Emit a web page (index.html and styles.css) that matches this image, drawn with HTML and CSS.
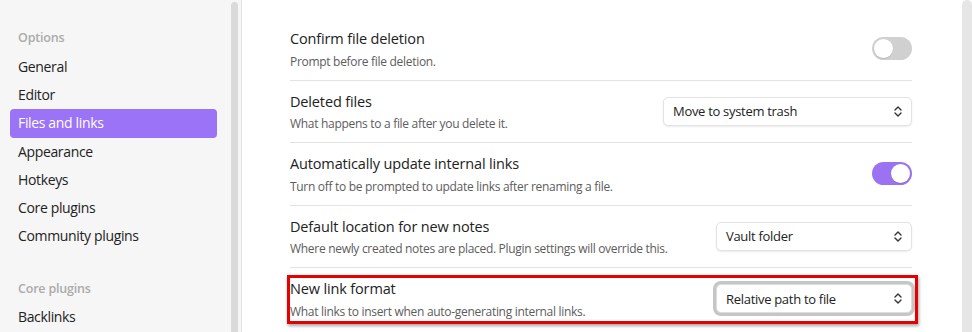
FILE: index.html
```html
<!DOCTYPE html>
<html>
<head>
<meta charset="utf-8">
<link rel="stylesheet" href="styles.css">
</head>
<body>
<div class="app">
  <aside class="sidebar">
    <nav class="nav">
      <div class="nav-header first">Options</div>
      <div class="nav-item">General</div>
      <div class="nav-item">Editor</div>
      <div class="nav-item active">Files and links</div>
      <div class="nav-item">Appearance</div>
      <div class="nav-item">Hotkeys</div>
      <div class="nav-item">Core plugins</div>
      <div class="nav-item">Community plugins</div>
      <div class="nav-header">Core plugins</div>
      <div class="nav-item">Backlinks</div>
    </nav>
    <div class="side-scroll"><div class="side-thumb"></div></div>
  </aside>
  <main class="main">
    <div class="content">
      <div class="setting">
        <div class="info">
          <div class="name">Confirm file deletion</div>
          <div class="desc">Prompt before file deletion.</div>
        </div>
        <div class="toggle"><div class="knob"></div></div>
      </div>
      <div class="setting">
        <div class="info">
          <div class="name">Deleted files</div>
          <div class="desc">What happens to a file after you delete it.</div>
        </div>
        <div class="dropdown wide"><span>Move to system trash</span>
          <svg class="chev" width="10" height="13" viewBox="0 0 10 13"><path d="M2 5 L5 2 L8 5 M2 8 L5 11 L8 8" fill="none" stroke="#333" stroke-width="1.4" stroke-linecap="round" stroke-linejoin="round"/></svg>
        </div>
      </div>
      <div class="setting">
        <div class="info">
          <div class="name">Automatically update internal links</div>
          <div class="desc">Turn off to be prompted to update links after renaming a file.</div>
        </div>
        <div class="toggle on"><div class="knob"></div></div>
      </div>
      <div class="setting">
        <div class="info">
          <div class="name">Default location for new notes</div>
          <div class="desc">Where newly created notes are placed. Plugin settings will override this.</div>
        </div>
        <div class="dropdown"><span>Vault folder</span>
          <svg class="chev" width="10" height="13" viewBox="0 0 10 13"><path d="M2 5 L5 2 L8 5 M2 8 L5 11 L8 8" fill="none" stroke="#333" stroke-width="1.4" stroke-linecap="round" stroke-linejoin="round"/></svg>
        </div>
      </div>
      <div class="setting highlight">
        <div class="info">
          <div class="name">New link format</div>
          <div class="desc">What links to insert when auto-generating internal links.</div>
        </div>
        <div class="dropdown focus"><span>Relative path to file</span>
          <svg class="chev" width="10" height="13" viewBox="0 0 10 13"><path d="M2 5 L5 2 L8 5 M2 8 L5 11 L8 8" fill="none" stroke="#333" stroke-width="1.4" stroke-linecap="round" stroke-linejoin="round"/></svg>
        </div>
        <div class="redbox"></div>
      </div>
    </div>
    <div class="main-scroll"><div class="main-thumb"></div></div>
  </main>
</div>
</body>
</html>
```
FILE: styles.css
```css
* { box-sizing: border-box; }
html, body { margin: 0; padding: 0; }
body {
  width: 972px;
  height: 332px;
  overflow: hidden;
  font-family: "Open Sans", "Noto Sans", sans-serif;
  color: #222;
  background: #fff;
}
.app { display: flex; height: 332px; }

.sidebar {
  width: 242px;
  flex: none;
  display: flex;
  background: #f6f6f6;
  border-right: 1px solid #e2e2e2;
}
.nav {
  width: 231px;
  padding: 0 14px 0 10px;
}
.nav-header {
  margin: 29px 0 4px 8px;
  height: 20px;
  line-height: 20px;
  font-size: 12.5px;
  font-weight: 600;
  letter-spacing: -0.2px;
  color: #ababab;
}
.nav-header.first { margin: 28px 0 5px 8px; }
.nav-item {
  height: 28.2px;
  line-height: 28px;
  padding: 0 8px;
  font-size: 14px;
  letter-spacing: -0.35px;
  color: #222;
  border-radius: 4px;
}
.nav-item.active { background: #9b73f6; color: #fff; }
.side-scroll { width: 10px; padding-top: 2px; }
.side-thumb {
  width: 7px;
  height: 100%;
  background: #dadada;
  border-radius: 4px 4px 0 0;
}

.main { flex: 1; display: flex; background: #fff; }
.content { flex: 1; padding: 18px 50px 0 48px; }
.main-scroll { width: 10px; flex: none; }
.main-thumb {
  width: 10px;
  height: 100%;
  background: #e6e6e6;
  border-radius: 5px 5px 0 0;
}

.setting {
  position: relative;
  display: flex;
  align-items: center;
  justify-content: space-between;
  padding: 11px 0 9px;
  border-top: 1px solid #e3e3e3;
}
.setting:first-child { border-top: none; }
.name { font-size: 14.5px; line-height: 20.5px; letter-spacing: -0.15px; color: #222; }
.desc { font-size: 12px; line-height: 18px; margin-top: 3px; letter-spacing: -0.3px; color: #5c5c5c; }

.toggle {
  width: 40px;
  height: 23px;
  margin-top: -2px;
  border-radius: 12px;
  background: #d0d0d0;
  padding: 2px;
  display: flex;
}
.toggle .knob {
  width: 19px;
  height: 19px;
  border-radius: 50%;
  background: #fff;
  box-shadow: 0 1px 1px rgba(0,0,0,0.1);
}
.toggle.on { background: #9b73f0; justify-content: flex-end; }

.dropdown {
  width: 196px;
  height: 29px;
  margin-top: -2px;
  display: flex;
  align-items: center;
  justify-content: space-between;
  padding: 0 8px 0 9px;
  background: #fff;
  border: 1px solid #e3e3e3;
  border-radius: 5px;
  box-shadow: 0 1px 2px rgba(0,0,0,0.08);
  font-size: 13px;
  letter-spacing: -0.3px;
  color: #222;
}
.dropdown.wide { width: 249px; }
.dropdown.focus { box-shadow: 0 0 0 3px #c6c6c6; border-color: #dcdcdc; }
.chev { flex: none; }

.redbox {
  position: absolute;
  left: -3px;
  right: -6px;
  top: 7px;
  bottom: 6px;
  border: 3px solid #e60000;
  box-shadow: 1px 2px 3px rgba(0,0,0,0.35);
  pointer-events: none;
}
```
